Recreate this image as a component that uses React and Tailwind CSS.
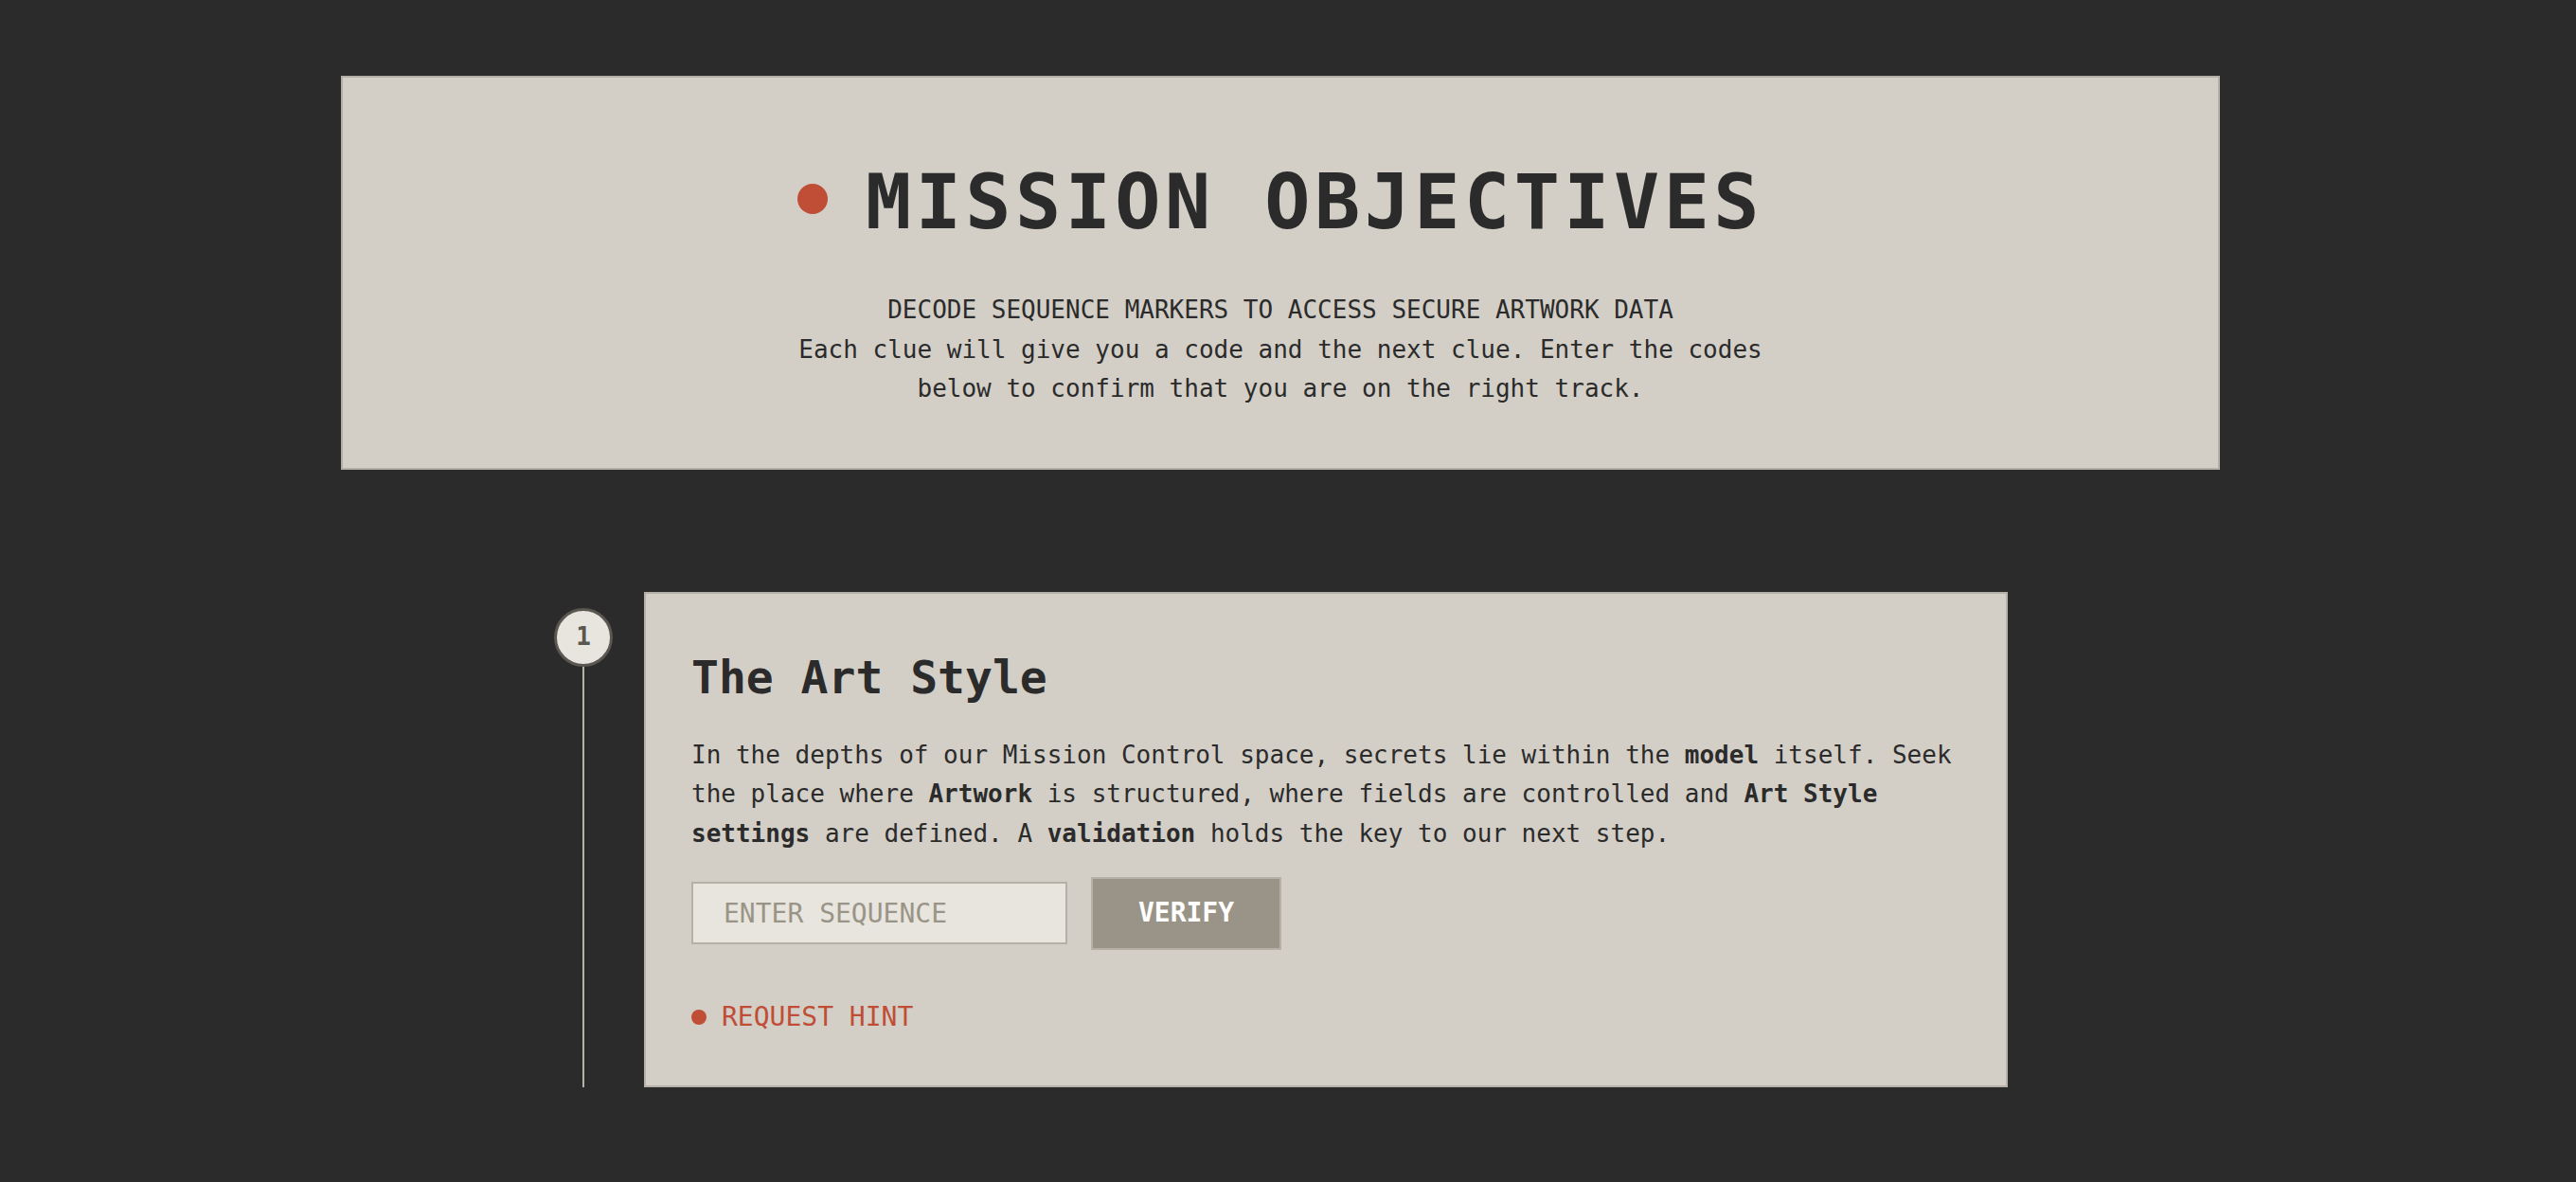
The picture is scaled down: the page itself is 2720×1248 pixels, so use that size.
import { useState } from "react";

export default function App() {
  const [code, setCode] = useState("");

  return (
    <div className="min-h-screen w-full bg-[#2b2b2b] font-['DejaVu_Sans_Mono',monospace] text-[#2b2b2b]">
      <div className="w-[2704px] pt-[80px]">
        {/* header */}
        <div className="ml-[360px] w-[1984px] border-2 border-[#b3afa4] bg-[#d3cfc7] pt-[92px] pb-[62px] text-center">
          <div className="flex items-center justify-center gap-[40px]">
            <span className="mb-[8px] h-[32px] w-[32px] shrink-0 rounded-full bg-[#c04e36]" />
            <h1 className="text-[80px] font-bold leading-none tracking-[4.5px]">
              MISSION OBJECTIVES
            </h1>
          </div>
          <div className="mx-auto mt-[53px] max-w-[1060px] text-[26px] leading-[41.6px]">
            <p>DECODE SEQUENCE MARKERS TO ACCESS SECURE ARTWORK DATA</p>
            <p>
              Each clue will give you a code and the next clue. Enter the codes
              below to confirm that you are on the right track.
            </p>
          </div>
        </div>

        {/* clue timeline */}
        <div className="ml-[584px] mt-[129px] flex w-[1536px] gap-[32px]">
          <div className="flex w-[64px] shrink-0 flex-col items-center">
            <div className="mt-[17px] flex h-[62px] w-[62px] items-center justify-center rounded-full border-[3px] border-[#5a5650] bg-[#e8e5de] text-[26px] font-bold text-[#5a5650]">
              1
            </div>
            <div className="w-[2px] flex-1 bg-[#b5b1a6]" />
          </div>

          <div className="flex-1 border-2 border-[#b5b1a6] bg-[#d3cfc7] px-[48px] pt-[64px] pb-[58px]">
            <h2 className="text-[48px] font-bold leading-none">The Art Style</h2>
            <p className="mt-[38px] text-[26px] leading-[41.6px]">
              In the depths of our Mission Control space, secrets lie within the{" "}
              <strong>model</strong> itself. Seek the place where{" "}
              <strong>Artwork</strong> is structured, where fields are controlled
              and <strong>Art Style</strong> <strong>settings</strong> are
              defined. A <strong>validation</strong> holds the key to our next
              step.
            </p>

            <div className="mt-[24px] flex items-center gap-[25px]">
              <input
                value={code}
                onChange={(e) => setCode(e.target.value)}
                placeholder="ENTER SEQUENCE"
                className="h-[66px] w-[397px] border-2 border-[#b5b1a6] bg-[#e8e5de] pl-[32px] text-[28px] uppercase outline-none placeholder:text-[#9a9488]"
              />
              <button className="h-[77px] w-[201px] border-2 border-[#b5b1a6] bg-[#9a9488] text-[28px] font-bold text-white">
                VERIFY
              </button>
            </div>

            <button className="mt-[57px] flex items-center gap-[16px] text-[28px] leading-none text-[#c04e36]">
              <span className="h-[16px] w-[16px] rounded-full bg-[#c04e36]" />
              REQUEST HINT
            </button>
          </div>
        </div>
      </div>
    </div>
  );
}
